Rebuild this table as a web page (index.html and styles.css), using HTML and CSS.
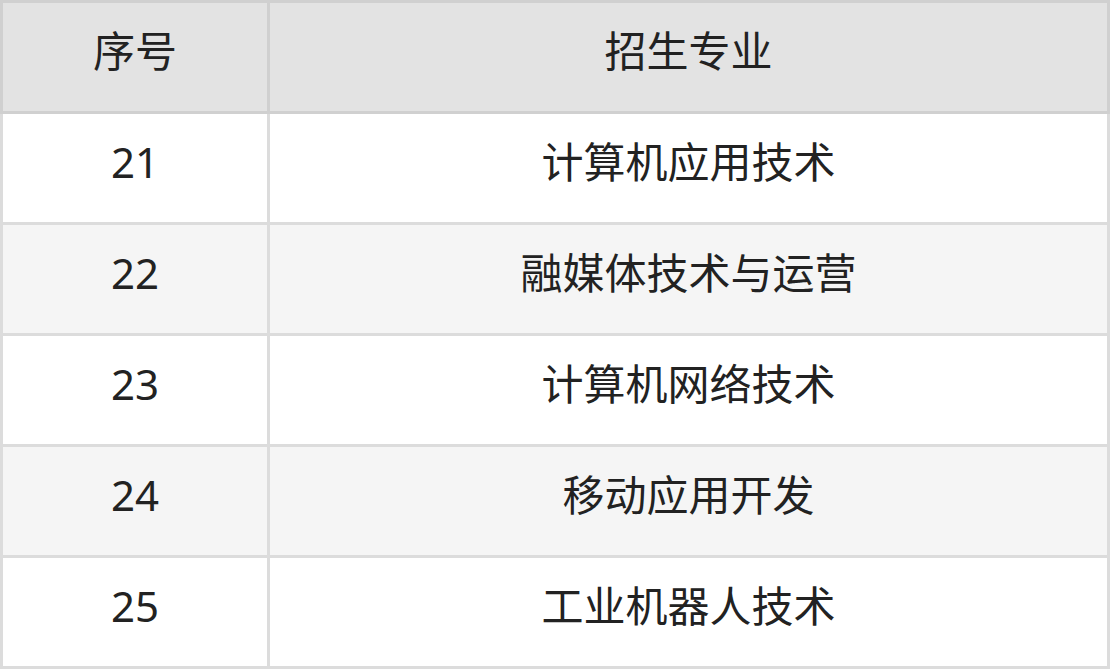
FILE: index.html
```html
<!DOCTYPE html>
<html lang="zh-CN">
<head>
<meta charset="utf-8">
<title>招生专业</title>
<link rel="stylesheet" href="styles.css">
</head>
<body>
<table class="majors">
  <thead>
    <tr><th class="col-no">序号</th><th>招生专业</th></tr>
  </thead>
  <tbody>
    <tr><td>21</td><td>计算机应用技术</td></tr>
    <tr><td>22</td><td>融媒体技术与运营</td></tr>
    <tr><td>23</td><td>计算机网络技术</td></tr>
    <tr><td>24</td><td>移动应用开发</td></tr>
    <tr><td>25</td><td>工业机器人技术</td></tr>
  </tbody>
</table>
</body>
</html>
```
FILE: styles.css
```css
html, body {
  margin: 0;
  padding: 0;
  background: #ffffff;
}
.majors {
  width: 1110px;
  border-collapse: collapse;
  font-family: "Noto Sans", "Noto Sans CJK SC", sans-serif;
  font-size: 42px;
  line-height: 1.2;
  color: #222222;
  table-layout: fixed;
}
.majors th,
.majors td {
  height: 96px;
  padding: 0 0 12px 0;
  text-align: center;
  vertical-align: middle;
  font-weight: normal;
  border: 3px solid #dcdcdc;
}
.majors th {
  background: #e3e3e3;
  border-color: #d0d0d0;
}
.majors .col-no {
  width: 264px;
}
.majors tbody tr:nth-child(even) td {
  background: #f5f5f5;
}
```
